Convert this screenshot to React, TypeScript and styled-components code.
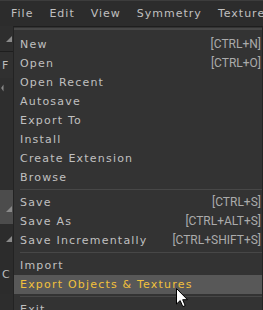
import React from "react";
import styled, { createGlobalStyle } from "styled-components";

const Global = createGlobalStyle`
  html, body { margin: 0; padding: 0; background: #2a2a2a; overflow: hidden; }
  #root { width: 263px; height: 310px; }
`;

const Screen = styled.div`
  position: relative;
  width: 263px;
  height: 310px;
  overflow: hidden;
  background: #2a2a2a;
  font-family: "DejaVu Sans", sans-serif;
  display: flex;
  flex-direction: column;
`;

const MenuBar = styled.div`
  display: flex;
  flex: none;
  height: 26px;
  box-sizing: border-box;
  padding-left: 3px;
  background: #2c2c2c;
  border-top: 1px solid #3c3c3c;
  white-space: nowrap;
  overflow: hidden;
`;

const BarItem = styled.div`
  flex: none;
  padding: 0 8px;
  font-size: 11px;
  letter-spacing: 1px;
  line-height: 25px;
  color: #c0c0c0;
`;

const Workspace = styled.div`
  flex: 1;
  display: flex;
  min-height: 0;
`;

const SideStrip = styled.div`
  width: 13px;
  flex: none;
  display: flex;
  flex-direction: column;
  background: #2d2d2d;
`;

const StripCell = styled.div<{ $h: number; $bg?: string; $line?: boolean }>`
  position: relative;
  height: ${(p) => p.$h}px;
  flex: none;
  background: ${(p) => p.$bg ?? "transparent"};
  border-bottom: ${(p) => (p.$line ? "1px solid #1e1e1e" : "none")};
  display: flex;
  align-items: center;
  justify-content: flex-end;
  padding-right: 1px;
  box-sizing: border-box;
`;

const StripLetter = styled.div`
  width: 100%;
  padding-left: 2px;
  font-family: "DejaVu Sans", sans-serif;
  font-size: 11px;
  color: #bdbdbd;
  overflow: hidden;
  white-space: nowrap;
`;

const MainArea = styled.div`
  flex: 1;
  background: #333333;
`;

const Dropdown = styled.div`
  position: absolute;
  top: 26px;
  left: 13px;
  right: 0;
  bottom: -40px;
  background: #333333;
  border-top: 1px solid #1e1e1e;
  border-left: 1px solid #232323;
  border-right: 1px solid #232323;
  padding-top: 8px;
  display: flex;
  flex-direction: column;
  &::before {
    content: "";
    position: absolute;
    top: 1px;
    left: 0;
    right: 0;
    height: 2px;
    background: #474747;
  }
`;

const Row = styled.div<{ $active?: boolean }>`
  flex: none;
  height: 19px;
  display: flex;
  align-items: center;
  justify-content: space-between;
  padding: 0 1px 0 6px;
  background: ${(p) => (p.$active ? "#585858" : "transparent")};
  white-space: nowrap;
`;

const Label = styled.span<{ $active?: boolean }>`
  font-family: "DejaVu Sans", sans-serif;
  font-size: 11px;
  letter-spacing: 1.2px;
  line-height: 19px;
  color: ${(p) => (p.$active ? "#f2c13c" : "#c0c0c0")};
`;

const Shortcut = styled.span`
  font-family: Roboto, sans-serif;
  font-size: 12px;
  line-height: 19px;
  color: #ababab;
`;

const Separator = styled.div`
  flex: none;
  height: 1px;
  margin: 2px 0 3px 6px;
  background: #474747;
`;

const Cursor = styled.svg`
  position: absolute;
  left: 176px;
  top: 288px;
`;

type Item = { label: string; shortcut?: string; active?: boolean } | "sep";

const items: Item[] = [
  { label: "New", shortcut: "[CTRL+N]" },
  { label: "Open", shortcut: "[CTRL+O]" },
  { label: "Open Recent" },
  { label: "Autosave" },
  { label: "Export To" },
  { label: "Install" },
  { label: "Create Extension" },
  { label: "Browse" },
  "sep",
  { label: "Save", shortcut: "[CTRL+S]" },
  { label: "Save As", shortcut: "[CTRL+ALT+S]" },
  { label: "Save Incrementally", shortcut: "[CTRL+SHIFT+S]" },
  "sep",
  { label: "Import" },
  { label: "Export Objects & Textures", active: true },
  "sep",
  { label: "Exit" },
];

const Tri = ({ d }: { d: string }) => (
  <svg width="6" height="6" viewBox="0 0 6 6">
    <path d={d} fill="#8a8a8a" />
  </svg>
);

export default function App() {
  return (
    <Screen>
      <Global />
      <MenuBar>
        {["File", "Edit", "View", "Symmetry", "Textures"].map((m) => (
          <BarItem key={m}>{m}</BarItem>
        ))}
      </MenuBar>
      <Workspace>
        <SideStrip>
          <StripCell $h={26} $bg="#2e2e2e" $line>
            <Tri d="M6 0 L6 6 L0 6 Z" />
          </StripCell>
          <StripCell $h={26} $bg="#303030">
            <StripLetter>F</StripLetter>
          </StripCell>
          <StripCell $h={20} $bg="#2e2e2e">
            <svg width="12" height="12" viewBox="0 0 12 12" style={{ marginRight: 5 }}>
              <path d="M6 0 L6 12 L2 6 Z" fill="#8a8a8a" />
            </svg>
          </StripCell>
          <StripCell $h={92} $bg="#2e2e2e" />
          <StripCell $h={34} $bg="#4c4c4c">
            <div style={{ alignSelf: "flex-end", marginBottom: 8 }}>
              <Tri d="M6 0 L6 6 L0 6 Z" />
            </div>
          </StripCell>
          <StripCell $h={30} $bg="#2c2c2c">
            <Tri d="M6 0 L6 6 L0 6 Z" />
          </StripCell>
          <StripCell $h={40} $bg="#2c2c2c">
            <StripLetter>C</StripLetter>
          </StripCell>
        </SideStrip>
        <MainArea />
      </Workspace>
      <Dropdown>
        {items.map((it, i) =>
          it === "sep" ? (
            <Separator key={i} />
          ) : (
            <Row key={i} $active={it.active}>
              <Label $active={it.active}>{it.label}</Label>
              {it.shortcut && <Shortcut>{it.shortcut}</Shortcut>}
            </Row>
          )
        )}
      </Dropdown>
      <Cursor width="13" height="20" viewBox="0 0 13 20">
        <path
          d="M0.5 0.5 L0.5 16 L4.2 12.6 L6.8 18.6 L9.2 17.6 L6.7 11.7 L11.5 11.7 Z"
          fill="#ffffff"
          stroke="#000000"
          strokeWidth="1"
          strokeLinejoin="round"
        />
      </Cursor>
    </Screen>
  );
}
